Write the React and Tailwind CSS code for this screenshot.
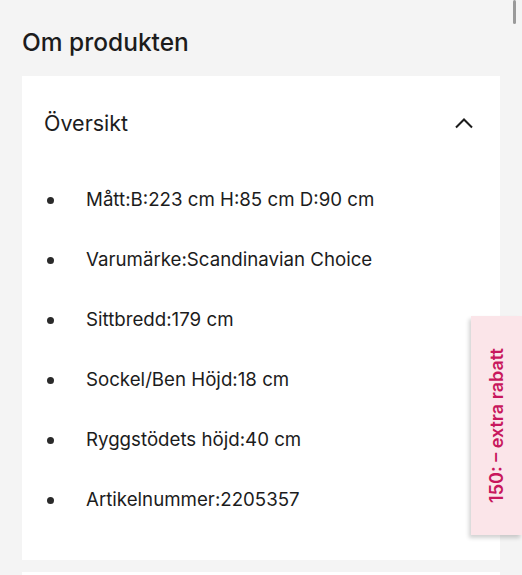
const ITEMS = [
  "Mått:B:223 cm H:85 cm D:90 cm",
  "Varumärke:Scandinavian Choice",
  "Sittbredd:179 cm",
  "Sockel/Ben Höjd:18 cm",
  "Ryggstödets höjd:40 cm",
  "Artikelnummer:2205357",
];

export default function App() {
  return (
    <div
      className="relative w-[522px] h-[575px] overflow-hidden bg-[#f4f4f4] text-[#1c1c1c]"
      style={{ fontFamily: "Inter, 'Noto Sans', sans-serif" }}
    >
      {/* scrollbar thumb */}
      <div className="absolute right-[6px] top-0 w-[3px] h-[24px] rounded-full bg-[#9a9a9a]" />

      <div className="pl-[22px] pr-[22px] pt-[26px]">
        <h2 className="text-[24.5px] font-medium leading-[32px]">Om produkten</h2>

        <div className="mt-[18px] bg-white">
          {/* Header */}
          <div className="h-[94px] flex items-center justify-between pl-[22px] pr-[26px]">
            <span className="text-[21.5px]">Översikt</span>
            <svg width="20" height="12" viewBox="0 0 20 12" fill="none">
              <path d="M2 10.5 L10 2.5 L18 10.5" stroke="#1c1c1c" strokeWidth="2" />
            </svg>
          </div>

          {/* List */}
          <ul className="pb-[30px]">
            {ITEMS.map((t) => (
              <li key={t} className="h-[60px] flex items-center pl-[25px]">
                <span className="w-[7px] h-[7px] rounded-full bg-[#2a2a2a]" />
                <span className="ml-[32px] text-[18.7px]">{t}</span>
              </li>
            ))}
          </ul>
        </div>

        <div className="mt-[12px] h-[40px] bg-white" />
      </div>

      {/* Promo tab */}
      <div className="absolute left-[471px] top-[316px] w-[51px] h-[219px] bg-[#fbe5e9] shadow-[-2px_3px_4px_rgba(0,0,0,0.18)] flex items-center justify-center">
        <span className="-rotate-90 whitespace-nowrap text-[18px] font-semibold text-[#c8175d]">
          150: – extra rabatt
        </span>
      </div>
    </div>
  );
}
